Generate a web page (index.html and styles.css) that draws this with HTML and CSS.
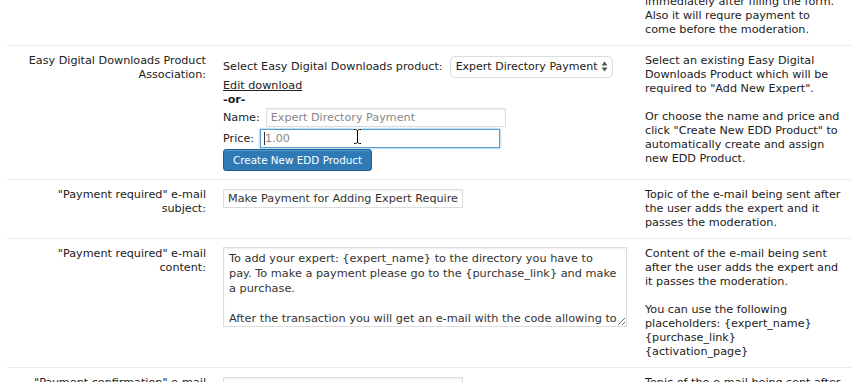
FILE: index.html
```html
<!DOCTYPE html>
<html lang="en">
<head>
    <meta charset="UTF-8">
    <meta name="viewport" content="width=device-width, initial-scale=1.0">
    <title>Expert Directory Settings</title>
    <link rel="stylesheet" href="styles.css">
</head>
<body>

    <div class="settings">
        <table class="form-table">
            <colgroup>
                <col class="col-label">
                <col class="col-field">
                <col class="col-desc">
            </colgroup>
            <tr>
                <th></th>
                <td></td>
                <td class="desc">immediately after filling the form.<br>Also it will requre payment to<br>come before the moderation.</td>
            </tr>
            <tr>
                <th>Easy Digital Downloads Product Association:</th>
                <td>
                    <div class="line select-line">
                        <span>Select Easy Digital Downloads product:</span>
                        <span class="select-wrap">
                            <select id="eddProduct">
                                <option>Expert Directory Payment</option>
                            </select>
                            <svg class="select-arrows" width="7" height="11" viewBox="0 0 7 11">
                                <polygon points="0.5,4.5 3.5,0.5 6.5,4.5" fill="#555"/>
                                <polygon points="0.5,6.5 3.5,10.5 6.5,6.5" fill="#555"/>
                            </svg>
                        </span>
                    </div>
                    <div class="line"><a href="#" class="edit-link">Edit download</a></div>
                    <div class="line"><b>-or-</b></div>
                    <div class="line input-line">
                        <label for="eddName">Name:</label>
                        <input type="text" id="eddName" placeholder="Expert Directory Payment">
                    </div>
                    <div class="line input-line">
                        <label for="eddPrice">Price:</label>
                        <span class="focus-wrap">
                            <input type="text" id="eddPrice" class="is-focused" placeholder="1.00">
                            <span class="caret"></span>
                            <svg class="ibeam" width="9" height="17" viewBox="0 0 9 17">
                                <path d="M1 1.5h1.5c1 0 2 .8 2 1.5 0-.7 1-1.5 2-1.5H8M4.5 3v11M1 15.5h1.5c1 0 2-.8 2-1.5 0 .7 1 1.5 2 1.5H8" fill="none" stroke="#fff" stroke-width="2.6"/>
                                <path d="M1 1.5h1.5c1 0 2 .8 2 1.5 0-.7 1-1.5 2-1.5H8M4.5 3v11M1 15.5h1.5c1 0 2-.8 2-1.5 0 .7 1 1.5 2 1.5H8" fill="none" stroke="#000" stroke-width="1"/>
                            </svg>
                        </span>
                    </div>
                    <button type="button" class="button-primary">Create New EDD Product</button>
                </td>
                <td class="desc">
                    <p>Select an existing Easy Digital<br>Downloads Product which will be<br>required to "Add New Expert".</p>
                    <p>Or choose the name and price and<br>click "Create New EDD Product" to<br>automatically create and assign<br>new EDD Product.</p>
                </td>
            </tr>
            <tr>
                <th>"Payment required" e-mail subject:</th>
                <td><input type="text" class="text-field" value="Make Payment for Adding Expert Required"></td>
                <td class="desc">Topic of the e-mail being sent after<br>the user adds the expert and it<br>passes the moderation.</td>
            </tr>
            <tr>
                <th>"Payment required" e-mail content:</th>
                <td><textarea class="text-area">To add your expert: {expert_name} to the directory you have to
pay. To make a payment please go to the {purchase_link} and make
a purchase.

After the transaction you will get an e-mail with the code allowing to
activate your expert: {activation_page}</textarea></td>
                <td class="desc">
                    <p>Content of the e-mail being sent<br>after the user adds the expert and<br>it passes the moderation.</p>
                    <p>You can use the following<br>placeholders: {expert_name}<br>{purchase_link}<br>{activation_page}</p>
                </td>
            </tr>
            <tr>
                <th>"Payment confirmation" e-mail subject:</th>
                <td><input type="text" class="text-field" value=""></td>
                <td class="desc">Topic of the e-mail being sent after<br>the user pays for the expert.</td>
            </tr>
        </table>
    </div>

</body>
</html>
```

FILE: styles.css
```css
body {
    margin: 0;
    background: #fff;
    color: #222;
    font-family: "DejaVu Sans", Verdana, sans-serif;
    font-size: 11.2px;
    line-height: 14px;
    overflow: hidden;
}
.settings {
    margin: -13px 0 0 7px;
}
.form-table {
    width: 845px;
    border-collapse: collapse;
    table-layout: fixed;
}
.col-label {
    width: 209px;
}
.col-field {
    width: 422px;
}
.col-desc {
    width: 214px;
}
.form-table tr {
    border-bottom: 1px solid #ececec;
}
.form-table th {
    padding: 8px 10px 8px 9px;
    text-align: right;
    vertical-align: top;
    font-weight: normal;
}
.form-table td {
    padding: 8px 7px;
    vertical-align: top;
}
.desc {
    white-space: nowrap;
}
.desc p {
    margin: 0 0 14px;
}
.desc p:last-child {
    margin-bottom: 0;
}
.line {
    height: 14px;
}
.select-line {
    display: flex;
    align-items: center;
    gap: 7px;
    height: 25px;
}
.select-wrap {
    position: relative;
    display: inline-block;
}
.select-wrap select {
    appearance: none;
    -webkit-appearance: none;
    width: 163px;
    height: 22px;
    margin: 0;
    padding: 0 11px 0 5px;
    border: 1px solid #dcdcdc;
    border-radius: 5px;
    background: #fff;
    color: #222;
    font-family: inherit;
    font-size: 11px;
    display: block;
}
.select-arrows {
    position: absolute;
    right: 5px;
    top: 5px;
}
.edit-link {
    color: #222;
    text-decoration: underline;
}
.input-line {
    display: flex;
    align-items: center;
    gap: 6px;
    height: 21px;
}
input[type="text"], .text-area {
    box-sizing: border-box;
    border: 1px solid #ddd;
    box-shadow: inset 0 1px 2px rgba(0, 0, 0, 0.07);
    background: #fff;
    color: #333;
    font: inherit;
    margin: 0;
    outline: none;
}
input[type="text"] {
    width: 240px;
    height: 19px;
    padding: 0 4px;
}
input::placeholder {
    color: #888;
}
input.is-focused {
    border-color: #5b9dd9;
    box-shadow: 0 0 2px rgba(30, 140, 190, 0.8);
}
.focus-wrap {
    position: relative;
    display: inline-block;
    height: 19px;
}
.focus-wrap input {
    display: block;
}
.caret {
    position: absolute;
    left: 4px;
    top: 3px;
    width: 1px;
    height: 13px;
    background: #333;
}
.ibeam {
    position: absolute;
    left: 93px;
    top: -1px;
}
.button-primary {
    display: block;
    height: 22px;
    margin: 0;
    padding: 0 9px;
    background: #2f7ab5;
    border: 1px solid #1e5c8d;
    border-radius: 3px;
    box-shadow: inset 0 1px 0 rgba(120, 190, 230, 0.5);
    color: #fff;
    font-family: "DejaVu Sans", Verdana, sans-serif;
    font-size: 10.4px;
    cursor: pointer;
}
.text-field {
    display: block;
    margin-top: 1px !important;
}
.text-area {
    display: block;
    width: 404px;
    height: 80px;
    padding: 3px 5px;
    font-size: 11.3px;
    line-height: 15px;
    overflow: hidden;
}
```
